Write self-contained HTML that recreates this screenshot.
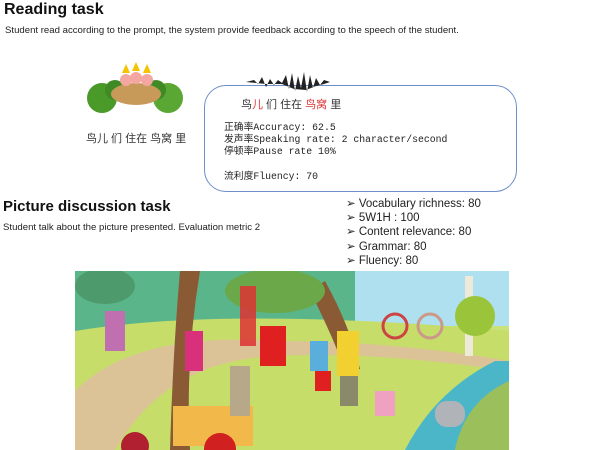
<!DOCTYPE html>
<html><head><meta charset="utf-8"><style>
body{margin:0;width:600px;height:450px;overflow:hidden;background:#fff;font-family:"Liberation Sans",sans-serif;position:relative}
.a{position:absolute;white-space:nowrap}
.cj{font-family:"Liberation Sans","Noto Sans CJK SC",sans-serif}
.mono{font-family:"Liberation Mono","Noto Sans CJK SC",monospace;font-size:9.8px;color:#222;line-height:12.2px}
.bl{font-family:"Liberation Sans",sans-serif;font-size:11.5px;color:#222;line-height:14.2px}
</style></head><body>
<div class="a" style="left:4px;top:1px;font-size:16px;font-weight:bold;color:#111">Reading task</div>
<div class="a" style="left:5px;top:25px;font-size:9.6px;color:#222">Student read according to the prompt, the system provide feedback according to the speech of the student.</div>

<svg class="a" style="left:82px;top:58px" width="106" height="60">
<circle cx="20" cy="40" r="15" fill="#4a9a2a"/><circle cx="86" cy="40" r="15" fill="#5aa833"/>
<circle cx="33" cy="32" r="10" fill="#3f8a25"/><circle cx="74" cy="32" r="10" fill="#3f8a25"/>
<ellipse cx="54" cy="36" rx="25" ry="11" fill="#c89a5a"/>
<circle cx="44" cy="22" r="6" fill="#f4a6a0"/><circle cx="54" cy="20" r="6" fill="#f4a6a0"/><circle cx="65" cy="22" r="6" fill="#f4a6a0"/>
<path d="M40 15l4-9 4 9M50 13l4-9 4 9M61 15l4-9 4 9" fill="#f5c400"/>
</svg>
<div class="a cj" style="left:86px;top:130px;font-size:11px;color:#333">鸟儿 们 住在 鸟窝 里</div>

<div class="a" style="left:204px;top:85px;width:311px;height:105px;border:1.3px solid #6f8ec9;border-radius:22px"></div>
<svg class="a" style="left:246px;top:71px" width="86" height="22">
<path d="M0 11 L8 9 L12 13 L16 6 L20 16 L24 8 L28 14 L32 9 L36 12 L40 4 L43 18 L46 2 L49 20 L52 5 L55 17 L58 1 L61 21 L64 4 L67 17 L70 7 L74 14 L78 9 L84 11 L78 13 L70 15 L60 19 L48 18 L36 13 L20 13 L0 11Z" fill="#222"/>
</svg>
<div class="a cj" style="left:241px;top:96px;font-size:11px;color:#333">鸟<span style="color:#d33">儿</span> 们 住在 <span style="color:#d33">鸟窝</span> 里</div>
<div class="a mono" style="left:224px;top:122px">正确率Accuracy: 62.5<br>发声率Speaking rate: 2 character/second<br>停顿率Pause rate 10%<br><br>流利度Fluency:  70</div>

<div class="a" style="left:3px;top:198px;font-size:15px;font-weight:bold;color:#111">Picture discussion task</div>
<div class="a" style="left:3px;top:222px;font-size:9.6px;color:#222">Student talk about the picture presented. Evaluation metric 2</div>
<div class="a bl" style="left:346px;top:197px">➢ Vocabulary richness: 80<br>➢ 5W1H : 100<br>➢ Content relevance: 80<br>➢ Grammar: 80<br>➢ Fluency: 80</div>

<svg class="a" style="left:75px;top:271px" width="434" height="179">
<rect width="434" height="179" fill="#c9e27a"/>
<rect width="434" height="55" fill="#aee0ef"/>
<path d="M0 0 H280 V55 L0 60Z" fill="#5ab58a"/>
<path d="M0 60 Q150 35 434 60 V179 H0Z" fill="#c6dd6a"/>
<path d="M0 120 Q60 60 200 70 Q320 70 434 90 L434 100 Q300 80 200 85 Q90 90 40 179 H0Z" fill="#dcc397"/>
<path d="M330 179 Q360 120 420 90 L434 90 V179Z" fill="#4cb6c9"/>
<path d="M380 179 Q390 130 434 110 V179Z" fill="#9bbf5a"/>
<rect x="360" y="130" width="30" height="26" rx="12" fill="#b0b4b8"/>
<path d="M105 0 H125 Q110 90 115 179 H95 Q98 80 105 0Z" fill="#8a5a35"/>
<path d="M235 20 Q260 70 270 100 L285 98 Q275 55 250 10Z" fill="#8a5a35"/>
<rect x="390" y="5" width="8" height="80" fill="#eee9d8"/>
<ellipse cx="200" cy="20" rx="50" ry="22" fill="#6aa84a"/>
<ellipse cx="30" cy="15" rx="30" ry="18" fill="#4d9a6c"/>
<ellipse cx="400" cy="45" rx="20" ry="20" fill="#9ac43a"/>
<rect x="98" y="135" width="80" height="40" fill="#f2b84a"/>
<rect x="165" y="15" width="16" height="60" fill="#d33" opacity=".85"/>
<rect x="110" y="60" width="18" height="40" fill="#d8307a"/>
<rect x="185" y="55" width="26" height="40" fill="#e02020"/>
<rect x="155" y="95" width="20" height="50" fill="#b8a88a"/>
<rect x="235" y="70" width="18" height="30" fill="#5aaedc"/>
<rect x="240" y="100" width="16" height="20" fill="#e02020"/>
<rect x="262" y="60" width="22" height="45" fill="#f2d030"/>
<rect x="265" y="105" width="18" height="30" fill="#8a8a6a"/>
<rect x="30" y="40" width="20" height="40" fill="#c070b0"/>
<circle cx="320" cy="55" r="12" fill="none" stroke="#c44" stroke-width="3"/>
<circle cx="355" cy="55" r="12" fill="none" stroke="#c98" stroke-width="3"/>
<rect x="300" y="120" width="20" height="25" fill="#f0a0c0"/>
<circle cx="60" cy="175" r="14" fill="#b02030"/><circle cx="145" cy="178" r="16" fill="#d02020"/>
</svg>
</body></html>
